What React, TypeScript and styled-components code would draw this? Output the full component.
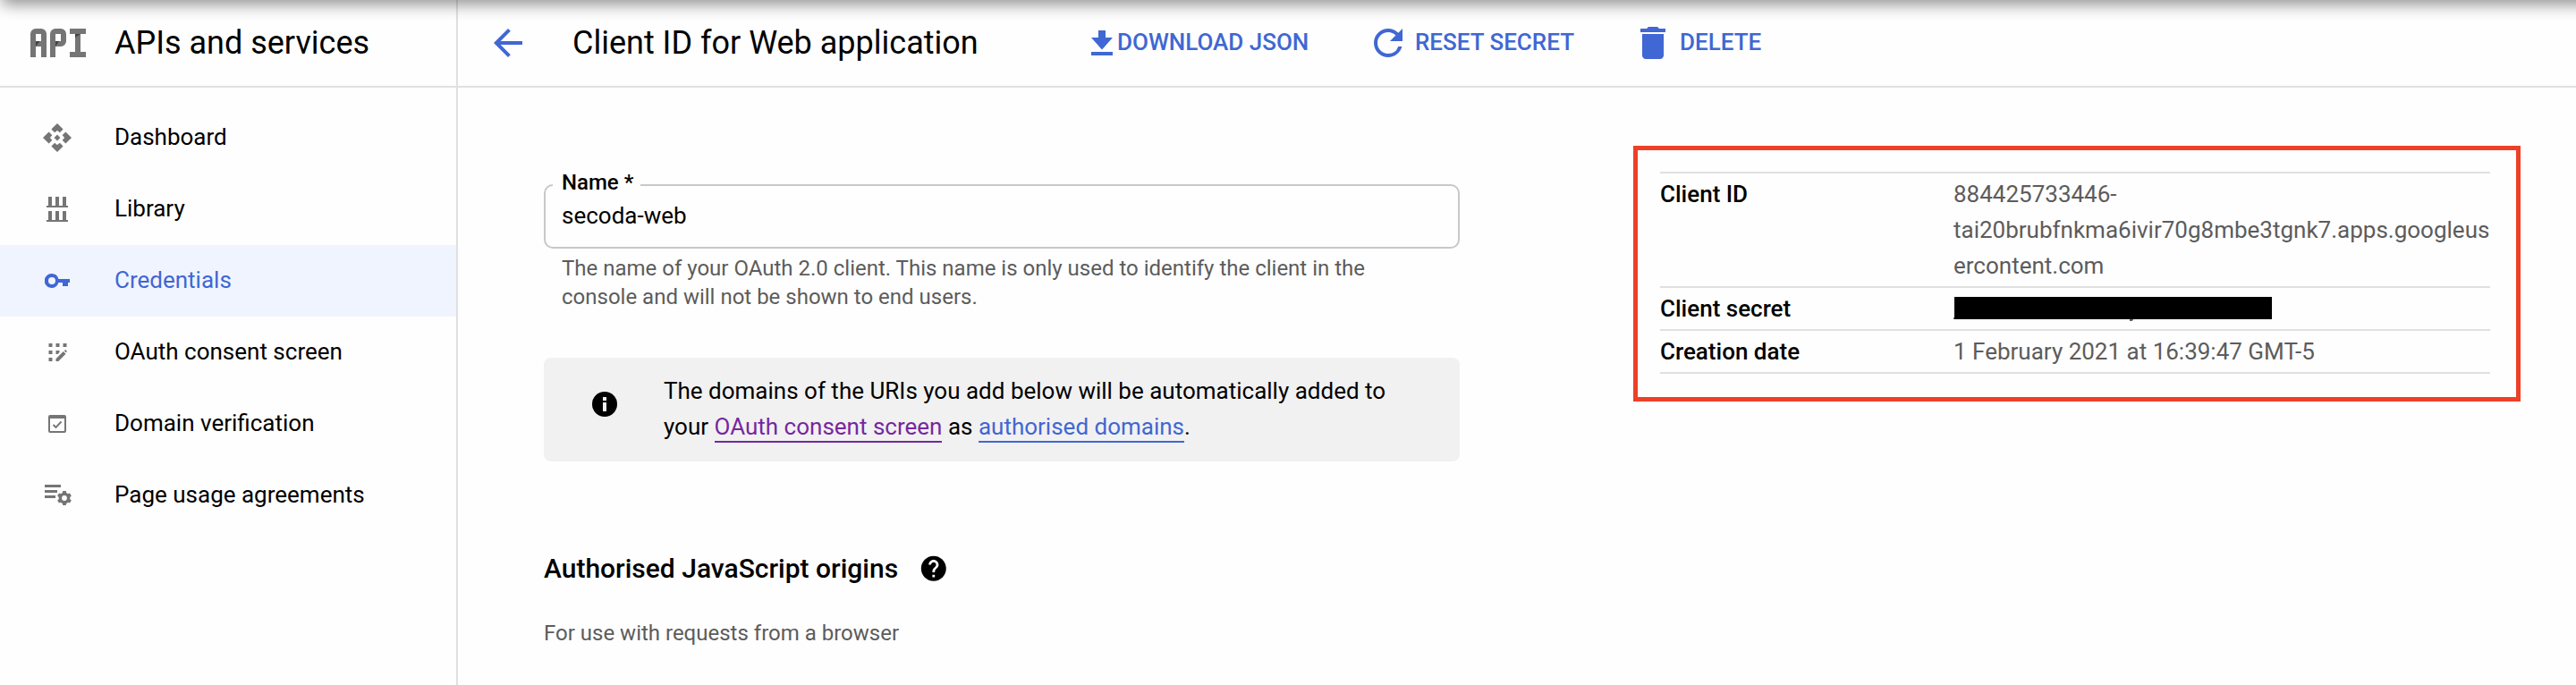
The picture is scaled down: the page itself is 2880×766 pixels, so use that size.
import React from 'react';
import styled, { createGlobalStyle, css } from 'styled-components';
import { MdArrowBack, MdDelete, MdHelp, MdRefresh } from 'react-icons/md';

const blue = '#4067d3';
const grey = '#757575';
const line = '#e0e0e0';

const GlobalStyle = createGlobalStyle`
  * { box-sizing: border-box; }
  body {
    margin: 0;
    background: #fefefe;
    color: #000;
    font-family: Roboto, "Liberation Sans", sans-serif;
    font-size: 26px;
    line-height: 40px;
  }
  svg { display: block; flex: none; }
`;

const Page = styled.div`
  position: relative;
  display: flex;
  width: 2880px;
  height: 766px;
  overflow: hidden;
`;

const TopShadow = styled.div`
  position: absolute;
  top: -40px;
  left: 2px;
  right: -20px;
  height: 40px;
  box-shadow: 0 5px 17px rgba(0, 0, 0, 0.43);
  pointer-events: none;
`;

const Sidebar = styled.aside`
  flex: none;
  width: 512px;
  border-right: 2px solid ${line};
`;

const headerBar = css`
  display: flex;
  align-items: center;
  height: 98px;
  border-bottom: 2px solid ${line};
`;

const SidebarHeader = styled.div`
  ${headerBar}
  padding-left: 34px;
  gap: 31px;
`;

const Title = styled.h1`
  margin: 0;
  font-size: 36px;
  font-weight: 400;
  line-height: 48px;
  white-space: nowrap;
`;

const Nav = styled.nav`
  padding-top: 16px;
`;

const NavItem = styled.a<{ $active?: boolean }>`
  display: flex;
  align-items: center;
  height: 80px;
  color: ${(p) => (p.$active ? blue : '#000')};
  background: ${(p) => (p.$active ? '#f0f4ff' : 'transparent')};
`;

const NavIcon = styled.span<{ $active?: boolean }>`
  display: flex;
  justify-content: center;
  width: 128px;
  color: ${(p) => (p.$active ? blue : grey)};
`;

const NavLabel = styled.span`
  padding-bottom: 2px;
`;

const Main = styled.main`
  flex: 1;
`;

const Toolbar = styled.header`
  ${headerBar}
  padding-left: 32px;
`;

const PageTitle = styled(Title)`
  width: 580px;
  margin-left: 48px;
`;

const Action = styled.button<{ $gap: number; $width: number }>`
  display: flex;
  align-items: center;
  gap: ${(p) => p.$gap}px;
  width: ${(p) => p.$width}px;
  padding: 0;
  border: 0;
  background: none;
  color: ${blue};
  font: 500 26px/40px Roboto, "Liberation Sans", sans-serif;
  white-space: nowrap;
`;

const ActionLabel = styled.span`
  padding-bottom: 2px;
`;

const Content = styled.div`
  display: flex;
  align-items: flex-start;
  gap: 194px;
  padding: 65px 62px 0 96px;
`;

const Form = styled.section`
  width: 1024px;
  padding-top: 28px;
`;

const Field = styled.fieldset`
  height: 87px;
  margin: 0;
  padding: 0 18px;
  border: 2px solid #c8c8c8;
  border-radius: 10px;
`;

const FieldLabel = styled.legend`
  height: 32px;
  margin-left: -10px;
  padding: 0 8px 0 10px;
  font-size: 24px;
  font-weight: 500;
  line-height: 26px;
`;

const FieldValue = styled.div`
  margin-top: -2px;
  line-height: 40px;
`;

const Hint = styled.p`
  width: 960px;
  margin: 6px 0 0 20px;
  color: #5c5c5c;
  font-size: 24px;
  line-height: 32px;
`;

const Notice = styled.div`
  display: flex;
  align-items: flex-start;
  height: 116px;
  margin-top: 52px;
  padding: 17px 60px 0 54px;
  gap: 52px;
  border-radius: 8px;
  background: #f1f1f1;

  svg { margin-top: 21px; }
`;

const NoticeText = styled.p`
  margin: 0;
  white-space: nowrap;
`;

const TextLink = styled.a<{ $visited?: boolean }>`
  padding-bottom: 1px;
  color: ${(p) => (p.$visited ? '#7627a0' : blue)};
  border-bottom: 2px solid currentColor;
`;

const SectionTitle = styled.h2`
  display: flex;
  align-items: center;
  gap: 23px;
  margin: 100px 0 0;
  font-size: 30px;
  font-weight: 500;
  line-height: 40px;
`;

const SectionHint = styled.p`
  margin: 36px 0 0;
  color: #5c5c5c;
  font-size: 24px;
  line-height: 32px;
`;

const Details = styled.section`
  width: 992px;
  height: 286px;
  padding: 24px 29px 0 25px;
  border: 5px solid #ee4026;
`;

const DetailList = styled.dl`
  margin: 0;
  border-top: 2px solid ${line};
`;

const DetailRow = styled.div`
  display: flex;
  padding: 3px 0;
  border-bottom: 2px solid ${line};
`;

const DetailLabel = styled.dt`
  flex: none;
  width: 328px;
  font-weight: 500;
`;

const DetailValue = styled.dd`
  flex: 1;
  margin: 0;
  color: #5c5c5c;
  white-space: nowrap;
`;

const Redacted = styled.div`
  position: relative;
  width: 355px;
  height: 25px;
  margin: 7px 0 0 1px;
  background: #000;

  &::before {
    content: '';
    position: absolute;
    left: -1px;
    bottom: 0;
    width: 1px;
    height: 2px;
    background: #5c5c5c;
  }

  &::after {
    content: '';
    position: absolute;
    left: 196px;
    top: 25px;
    width: 4px;
    height: 2px;
    border-radius: 0 0 3px 0;
    background: #5c5c5c;
  }
`;

const ApiLogo = () => (
  <svg width="63" height="32" viewBox="0 0 63 32" fill={grey}>
    <path fillRule="evenodd" d="M0 32V6a6 6 0 0 1 6-6h6a6 6 0 0 1 6 6v26h-6V20H6v12zM6 14h6V6H6z" />
    <path fillRule="evenodd" d="M22 32V6a6 6 0 0 1 6-6h6a6 6 0 0 1 6 6v8a6 6 0 0 1-6 6h-6v12zM28 14h6V6h-6z" />
    <path d="M44 0h18v6h-6v20h6v6H44v-6h6V6h-6z" />
    <path fill="#424242" d="M6 14h4.500L6 20zM28 14h4l-4 6zM50 6h6l-6 4z" />
  </svg>
);

const DashboardIcon = () => (
  <svg width="32" height="32" viewBox="0 0 32 32" fill="currentColor">
    {[0, 90, 180, 270].map((angle) => (
      <path
        key={angle}
        d="M16 0l6.600 6.600-3.500 3.500a1.500 1.500 0 0 1-1.600-1.100L16 8l-1.500 1a1.500 1.500 0 0 1-1.600 1.100L9.400 6.600z"
        transform={`rotate(${angle} 16 16)`}
      />
    ))}
    <path d="M16 12.600l3.400 3.400-3.400 3.400-3.400-3.400z" stroke="none" />
  </svg>
);

const LibraryIcon = () => (
  <svg width="24" height="28" viewBox="0 0 24 28" fill="currentColor">
    <path d="M2 0h4v10h4V0h4v10h4V0h4v10h2v2H0v-2h2zM2 16h4v10h4V16h4v10h4V16h4v10h2v2H0v-2h2z" />
  </svg>
);

const KeyIcon = () => (
  <svg width="28" height="16" viewBox="0 0 28 16" fill="currentColor">
    <path fillRule="evenodd" d="M8 0a8 8 0 0 1 7.450 6H28v4h-2v4h-6v-4h-4.550A8 8 0 1 1 8 0zm0 4a4 4 0 1 0 0 8 4 4 0 0 0 0-8z" />
  </svg>
);

const ConsentIcon = () => (
  <svg width="21" height="20" viewBox="-.5 0 21 20" fill="currentColor">
    <path d="M0 0h4v4H0zM8 0h4v4H8zM16 0h4v4h-4zM0 8h4v4H0zM8 8h4v2l-2 2H8zM0 16h4v4H0z" />
    <path d="M8 20v-2.800l8.300-8.200 2.700 2.700L10.800 20zM17.200 8.200l.9-.8q.5-.4 1 0l1 1q.4.500 0 1l-.8.900z" />
  </svg>
);

const DomainIcon = () => (
  <svg width="20" height="20" viewBox="0 0 20 20" fill="currentColor">
    <path fillRule="evenodd" d="M2 0h16a2 2 0 0 1 2 2v16a2 2 0 0 1-2 2H2a2 2 0 0 1-2-2V2a2 2 0 0 1 2-2zm0 4v14h16V4z" />
    <path d="M5.500 11l3 3 6-6.500" fill="none" stroke="currentColor" strokeWidth="1.900" />
  </svg>
);

const AgreementsIcon = () => (
  <svg width="32" height="24" viewBox="0 0 32 24" fill="currentColor">
    <path d="M2 0h18v3H2zM2 6h14v3H2zM2 12h12v3H2z" />
    <circle cx="24" cy="15" r="4.600" fill="none" stroke="currentColor" strokeWidth="3.400" />
    {[0, 60, 120, 180, 240, 300].map((angle) => (
      <path key={angle} d="M21.700 10l.5-3h3.600l.5 3z" transform={`rotate(${angle} 24 15)`} />
    ))}
  </svg>
);

const DownloadIcon = () => (
  <svg width="24" height="28" viewBox="0 0 24 28" fill="currentColor">
    <path d="M8 0h8v8h8L12 21.500 0 8h8zM0 24h24v4H0z" />
  </svg>
);

const InfoIcon = () => (
  <svg width="28" height="28" viewBox="0 0 28 28">
    <circle cx="14" cy="14" r="14" />
    <path fill="#f1f1f1" d="M12 6h4v4h-4zM12 12h4v10h-4z" />
  </svg>
);

const navItems = [
  { label: 'Dashboard', icon: <DashboardIcon /> },
  { label: 'Library', icon: <LibraryIcon /> },
  { label: 'Credentials', icon: <KeyIcon />, active: true },
  { label: 'OAuth consent screen', icon: <ConsentIcon /> },
  { label: 'Domain verification', icon: <DomainIcon /> },
  { label: 'Page usage agreements', icon: <AgreementsIcon /> },
];

export default function App() {
  return (
    <>
      <GlobalStyle />
      <Page>
        <Sidebar>
          <SidebarHeader>
            <ApiLogo />
            <Title>APIs and services</Title>
          </SidebarHeader>
          <Nav>
            {navItems.map((item) => (
              <NavItem key={item.label} $active={item.active}>
                <NavIcon $active={item.active}>{item.icon}</NavIcon>
                <NavLabel>{item.label}</NavLabel>
              </NavItem>
            ))}
          </Nav>
        </Sidebar>
        <Main>
          <Toolbar>
            <MdArrowBack size={48} color={blue} />
            <PageTitle as="h2">Client ID for Web application</PageTitle>
            <Action $gap={5} $width={308}>
              <DownloadIcon />
              <ActionLabel>DOWNLOAD JSON</ActionLabel>
            </Action>
            <Action $gap={6} $width={296}>
              <MdRefresh size={48} />
              <ActionLabel>RESET SECRET</ActionLabel>
            </Action>
            <Action $gap={6} $width={150}>
              <MdDelete size={48} />
              <ActionLabel>DELETE</ActionLabel>
            </Action>
          </Toolbar>
          <Content>
            <Form>
              <Field>
                <FieldLabel>Name *</FieldLabel>
                <FieldValue>secoda-web</FieldValue>
              </Field>
              <Hint>
                The name of your OAuth 2.0 client. This name is only used to identify the client in the
                <br />
                console and will not be shown to end users.
              </Hint>
              <Notice>
                <InfoIcon />
                <NoticeText>
                  The domains of the URIs you add below will be automatically added to
                  <br />
                  your <TextLink $visited>OAuth consent screen</TextLink> as{' '}
                  <TextLink>authorised domains</TextLink>.
                </NoticeText>
              </Notice>
              <SectionTitle>
                Authorised JavaScript origins
                <MdHelp size={33.6} />
              </SectionTitle>
              <SectionHint>For use with requests from a browser</SectionHint>
            </Form>
            <Details>
              <DetailList>
                <DetailRow>
                  <DetailLabel>Client ID</DetailLabel>
                  <DetailValue>
                    884425733446-
                    <br />
                    tai20brubfnkma6ivir70g8mbe3tgnk7.apps.googleus
                    <br />
                    ercontent.com
                  </DetailValue>
                </DetailRow>
                <DetailRow>
                  <DetailLabel>Client secret</DetailLabel>
                  <DetailValue>
                    <Redacted />
                  </DetailValue>
                </DetailRow>
                <DetailRow>
                  <DetailLabel>Creation date</DetailLabel>
                  <DetailValue>1 February 2021 at 16:39:47 GMT-5</DetailValue>
                </DetailRow>
              </DetailList>
            </Details>
          </Content>
        </Main>
        <TopShadow />
      </Page>
    </>
  );
}
